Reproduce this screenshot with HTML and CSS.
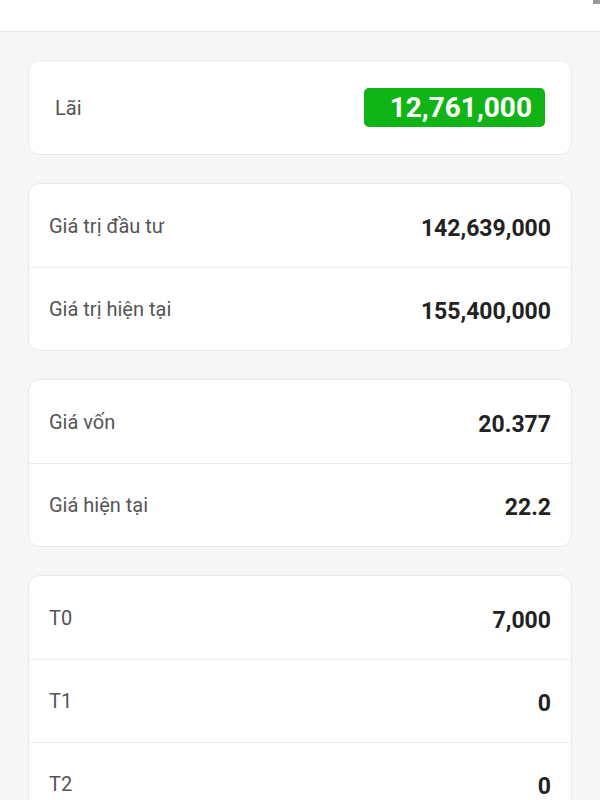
FILE: index.html
```html
<!DOCTYPE html>
<html lang="vi">

<head>
    <meta charset="UTF-8">
    <meta name="viewport" content="width=device-width, initial-scale=1.0">
    <title>Lãi / Lỗ</title>

    <link rel="stylesheet" href="styles.css">
</head>

<body>
    <header class="topbar">
        <div class="scroll-thumb"></div>
    </header>

    <main class="content">
        <section class="card card-profit">
            <span class="label">Lãi</span>
            <span class="badge">12,761,000</span>
        </section>

        <section class="card">
            <div class="row">
                <span class="label">Giá trị đầu tư</span>
                <span class="value">142,639,000</span>
            </div>
            <div class="row">
                <span class="label">Giá trị hiện tại</span>
                <span class="value">155,400,000</span>
            </div>
        </section>

        <section class="card">
            <div class="row">
                <span class="label">Giá vốn</span>
                <span class="value">20.377</span>
            </div>
            <div class="row">
                <span class="label">Giá hiện tại</span>
                <span class="value">22.2</span>
            </div>
        </section>

        <section class="card">
            <div class="row">
                <span class="label">T0</span>
                <span class="value">7,000</span>
            </div>
            <div class="row">
                <span class="label">T1</span>
                <span class="value">0</span>
            </div>
            <div class="row">
                <span class="label">T2</span>
                <span class="value">0</span>
            </div>
        </section>
    </main>
</body>

</html>
```

FILE: styles.css
```css
body {
    margin: 0;
    background-color: #f6f6f6;
    font-family: Roboto, "Noto Sans", Arial, sans-serif;
    color: #222;
}

.topbar {
    position: relative;
    height: 31px;
    background-color: #fff;
    border-bottom: 1px solid #e6e6e6;
}

.scroll-thumb {
    position: absolute;
    top: 0;
    right: 0;
    width: 7px;
    height: 4px;
    background-color: #9a9a9a;
}

.content {
    display: flex;
    flex-direction: column;
    gap: 28px;
    padding: 28px 28px;
}

.card {
    background-color: #fff;
    border: 1px solid #e8e8e8;
    border-radius: 12px;
    overflow: hidden;
}

.card-profit {
    display: flex;
    justify-content: space-between;
    align-items: center;
    height: 93px;
    padding: 0 26px;
}

.badge {
    display: flex;
    justify-content: flex-end;
    align-items: center;
    min-width: 144px;
    height: 39px;
    padding: 0 13px 0 24px;
    background-color: #11b416;
    border-radius: 5px;
    color: #fff;
    font-size: 28px;
    font-weight: 700;
}

.row {
    display: flex;
    justify-content: space-between;
    align-items: center;
    height: 82px;
    padding: 0 20px;
}

.row:first-child {
    height: 83px;
}

.row + .row {
    border-top: 1px solid #ebebeb;
}

.label {
    font-size: 20px;
    color: #555;
}

.value {
    margin-top: 5px;
    font-size: 23px;
    font-weight: 700;
    color: #222;
}
```
